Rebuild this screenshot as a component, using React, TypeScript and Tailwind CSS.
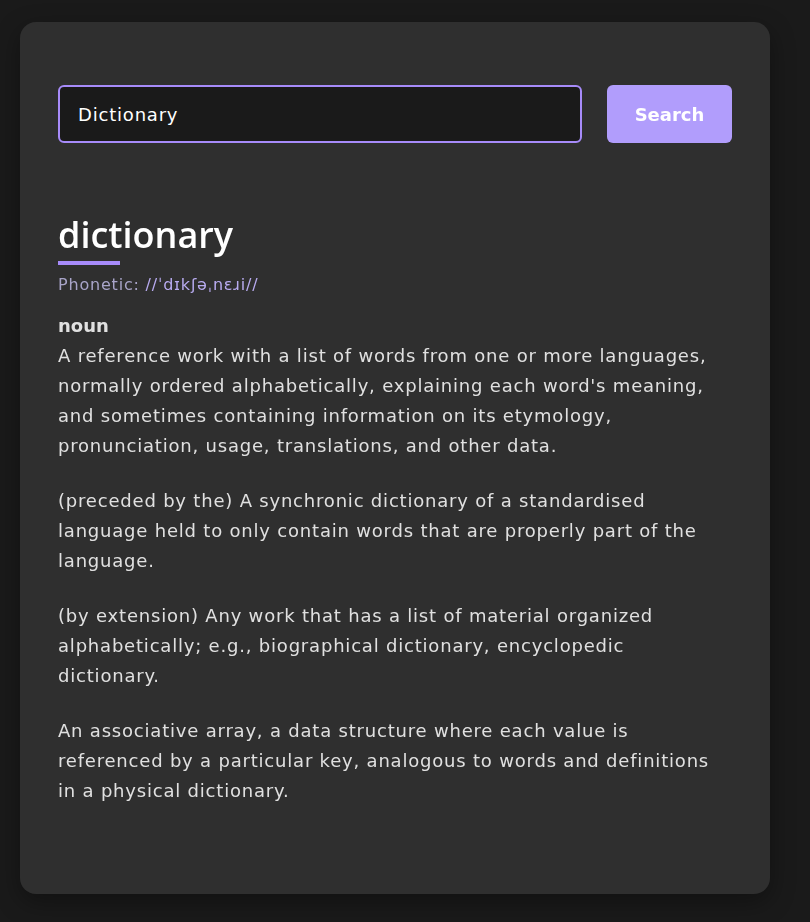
import { useState } from "react";

const definitions = [
  "A reference work with a list of words from one or more languages, normally ordered alphabetically, explaining each word's meaning, and sometimes containing information on its etymology, pronunciation, usage, translations, and other data.",
  "(preceded by the) A synchronic dictionary of a standardised language held to only contain words that are properly part of the language.",
  "(by extension) Any work that has a list of material organized alphabetically; e.g., biographical dictionary, encyclopedic dictionary.",
  "An associative array, a data structure where each value is referenced by a particular key, analogous to words and definitions in a physical dictionary.",
];

export default function App() {
  const [query, setQuery] = useState("Dictionary");

  return (
    <div
      className="min-h-[922px] bg-[#1a1a1a] pt-[22px] pb-[29px] pl-5"
      style={{ fontFamily: '"DejaVu Sans", "Open Sans", sans-serif' }}
    >
      <div className="w-[750px] rounded-2xl bg-[#2f2f2f] px-[38px] pt-[63px] pb-[88px] shadow-[0_8px_24px_rgba(0,0,0,0.35)]">
        <form
          className="flex gap-[25px]"
          onSubmit={(e) => e.preventDefault()}
        >
          <input
            autoFocus
            value={query}
            onChange={(e) => setQuery(e.target.value)}
            className="h-[58px] flex-1 rounded-md border-2 border-[#a78bfa] bg-[#1a1a1a] px-[18px] text-[18px] tracking-[0.8px] text-white caret-white outline-none"
          />
          <button
            type="submit"
            className="h-[58px] w-[125px] rounded-md bg-[#b19dfc] text-[18px] font-bold text-white"
          >
            Search
          </button>
        </form>

        <div className="mt-[68px]">
          <h1 className="font-['Open_Sans',sans-serif] text-[36px] font-semibold leading-[48px] text-white">
            dictionary
          </h1>
          <div className="mt-[2px] h-1 w-[62px] bg-[#a78bfa]" />
          <p className="mt-[8px] text-[16px] leading-[24px] tracking-[0.8px] text-[#a8a4c8]">
            Phonetic: <span className="text-[#b8abf0]">//ˈdɪkʃəˌnɛɹi//</span>
          </p>
          <p className="mt-[18px] text-[18px] font-bold leading-[22px] text-[#e0e0e0]">
            noun
          </p>
          <div className="mt-[4px] flex flex-col gap-[25px]">
            {definitions.map((d) => (
              <p key={d} className="text-[18px] leading-[30px] tracking-[0.8px] text-[#e0e0e0]">
                {d}
              </p>
            ))}
          </div>
        </div>
      </div>
    </div>
  );
}
